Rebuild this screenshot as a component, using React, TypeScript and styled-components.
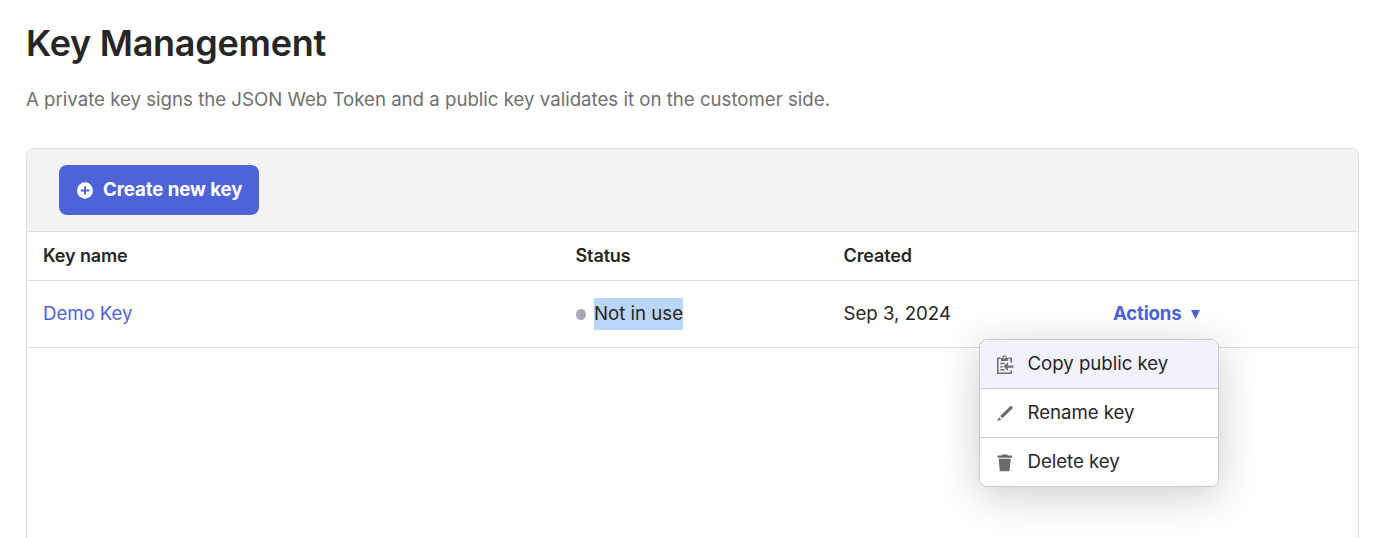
import React from 'react';
import styled, { createGlobalStyle } from 'styled-components';

const GlobalStyle = createGlobalStyle`
  * { box-sizing: border-box; }
  html, body { margin: 0; padding: 0; background: #fff; }
  body {
    font-family: Inter, "Liberation Sans", sans-serif;
    font-size: 18.65px;
    line-height: 30px;
    color: #262626;
    -webkit-font-smoothing: antialiased;
  }
`;

const Page = styled.main`
  display: flex;
  flex-direction: column;
  height: 538px;
  padding: 19px 23px 0 26px;
  overflow: hidden;
`;

const Title = styled.h1`
  margin: 0;
  font-size: 36px;
  line-height: 48px;
  font-weight: 600;
  letter-spacing: -0.26px;
`;

const Description = styled.p`
  margin: 17px 0 34px;
  color: #6f6f6f;
`;

const Panel = styled.section`
  flex: 1;
  border: 1px solid #dfdfdf;
  border-bottom: 0;
  border-radius: 8px 8px 0 0;
`;

const Toolbar = styled.div`
  display: flex;
  align-items: center;
  height: 83px;
  padding: 0 32px;
  background: #f3f3f3;
  border-bottom: 1px solid #dfdfdf;
  border-radius: 7px 7px 0 0;
`;

const PrimaryButton = styled.button`
  display: flex;
  align-items: center;
  gap: 10px;
  width: 200px;
  height: 50px;
  padding: 0 0 2px 18px;
  border: 0;
  border-radius: 8px;
  background: #4f63d9;
  color: #fff;
  font: 700 18.65px/30px Inter, "Liberation Sans", sans-serif;
  letter-spacing: -0.07px;
  white-space: nowrap;

  svg { margin-top: 2px; }
`;

const Row = styled.div`
  display: grid;
  grid-template-columns: 532.5px 268px 267.5px 1fr;
  align-items: center;
  height: 67px;
  padding-left: 16px;
  border-bottom: 1px solid #dfdfdf;

  > * { height: 32px; }
`;

const HeadRow = styled(Row)`
  height: 49px;
  font-size: 18px;
  line-height: 32px;
  font-weight: 600;
  letter-spacing: -0.12px;
`;

const KeyLink = styled.a`
  color: #4f63d9;
  letter-spacing: -0.05px;
`;

const Status = styled.div`
  display: flex;
  align-items: center;
  gap: 8px;
  padding-left: 0.5px;
`;

const Dot = styled.i`
  width: 10px;
  height: 11px;
  margin-top: 1px;
  border-radius: 50%;
  background: #a9a9b2;
`;

const Selected = styled.span`
  height: 32px;
  background: #b9d6fb;
`;

const ActionCell = styled.div`
  position: relative;
`;

const ActionsButton = styled.button`
  display: flex;
  align-items: center;
  gap: 9.5px;
  height: 32px;
  padding: 0 0 2px 2px;
  border: 0;
  background: none;
  color: #4f63d9;
  font: 700 18.65px/30px Inter, "Liberation Sans", sans-serif;
  letter-spacing: -0.18px;

  svg { margin-top: 2px; }
`;

const Menu = styled.div`
  position: absolute;
  top: 41px;
  right: 139px;
  width: 240px;
  border: 1px solid #c8c8cb;
  border-radius: 8px;
  background: #fff;
  overflow: hidden;
  box-shadow: 0 8px 40px rgba(0, 0, 0, 0.2);
`;

const MenuItem = styled.div<{ $active?: boolean }>`
  display: flex;
  align-items: center;
  gap: 13.5px;
  height: 49px;
  padding: 0 16px 2px;
  background: ${(p) => (p.$active ? '#f2f2fd' : '#fff')};
  border-bottom: 1px solid #c8c8cb;
  letter-spacing: -0.03px;
  &:last-child { height: 48px; border-bottom: 0; }

  svg { margin-top: 4px; flex: none; }
`;

const PlusIcon = () => (
  <svg width="16" height="17" viewBox="0 0 16 17">
    <ellipse cx="8" cy="8.5" rx="8" ry="8.2" fill="#fff" />
    <path d="M8 4.2v8.6M3.7 8.5h8.6" stroke="#4f63d9" strokeWidth="1.8" />
  </svg>
);

const CopyIcon = () => (
  <svg width="18" height="20" viewBox="0 0 18 20" fill="none" stroke="#737373">
    <path d="M4.5 3.3H1.8v15h13.4v-2.8M12.5 3.3h2.7v4.4" strokeWidth="1.6" />
    <path d="M4.8 3h7.4v2.9H4.8z" fill="#737373" stroke="none" />
    <circle cx="8.5" cy="2.5" r="1.6" fill="#f2f2fd" strokeWidth="1.2" />
    <path d="M4.2 8.6h4.6M4.2 11.7h2.4M4.2 14.8h4.3" strokeWidth="1.5" />
    <path d="M10 11.6h7.6" strokeWidth="2.4" />
    <path d="M7.4 11.6l4.6-4.3v8.6z" fill="#737373" stroke="none" />
  </svg>
);

const PencilIcon = () => (
  <svg width="18" height="18" viewBox="0 0 18 18" fill="#6b6b6b">
    <path d="M14.1 1.2q.7-.6 1.4 0l.9.9q.7.7 0 1.4L6.5 13.3 4.2 11zM3.2 12.2l2.1 2.2-3.7 1.7-.4-.4z" />
  </svg>
);

const TrashIcon = () => (
  <svg width="18" height="18" viewBox="0 0 18 18" fill="#6b6b6b">
    <path d="M6.2.6h5l.8 1h4v2.2H1.5V1.6h4zM2.6 4.8h12.2l-1.2 11.6q-.1.8-1 .8H4.8q-.9 0-1-.8z" />
  </svg>
);

export default function App() {
  return (
    <Page>
      <GlobalStyle />
      <Title>Key Management</Title>
      <Description>
        A private key signs the JSON Web Token and a public key validates it on the customer side.
      </Description>
      <Panel>
        <Toolbar>
          <PrimaryButton><PlusIcon />Create new key</PrimaryButton>
        </Toolbar>
        <HeadRow>
          <span>Key name</span>
          <span>Status</span>
          <span>Created</span>
        </HeadRow>
        <Row>
          <KeyLink>Demo Key</KeyLink>
          <Status><Dot /><Selected>Not in use</Selected></Status>
          <span>Sep 3, 2024</span>
          <ActionCell>
            <ActionsButton>
              Actions
              <svg width="9" height="9" viewBox="0 0 9 9"><path d="M0 0h9L4.5 9z" fill="#4f63d9" /></svg>
            </ActionsButton>
            <Menu>
              <MenuItem $active><CopyIcon />Copy public key</MenuItem>
              <MenuItem><PencilIcon />Rename key</MenuItem>
              <MenuItem><TrashIcon />Delete key</MenuItem>
            </Menu>
          </ActionCell>
        </Row>
      </Panel>
    </Page>
  );
}
